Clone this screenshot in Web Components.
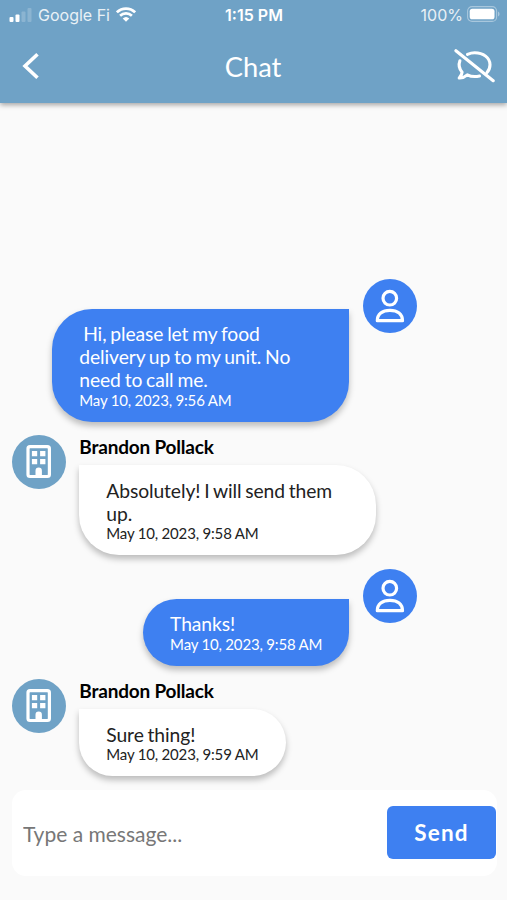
<!DOCTYPE html>
<html lang="en">
<head>
<meta charset="utf-8">
<title>Chat</title>
<style>
    body {
        margin: 0;
        height: 900px;
        display: flex;
        flex-direction: column;
        overflow: hidden;
        background: #fafafa;
        font-family: Lato, "Liberation Sans", sans-serif;
        --accent: #3e80f1;
        --bar: #6fa2c6;
    }
</style>
</head>
<body>
    <chat-header>
        <status-bar slot="status" carrier="Google Fi" time="1:15 PM" battery="100%"></status-bar>
        Chat
    </chat-header>

    <chat-feed>
        <chat-message mine stamp="May 10, 2023, 9:56 AM">&nbsp;Hi, please let my food delivery up to my unit. No need to call me.</chat-message>
        <chat-message from="Brandon Pollack" stamp="May 10, 2023, 9:58 AM">Absolutely! I will send them up.</chat-message>
        <chat-message mine stamp="May 10, 2023, 9:58 AM">Thanks!</chat-message>
        <chat-message from="Brandon Pollack" stamp="May 10, 2023, 9:59 AM">Sure thing!</chat-message>
    </chat-feed>

    <chat-composer placeholder="Type a message...">Send</chat-composer>

<script>
class StatusBar extends HTMLElement {
    constructor() {
        super();
        this.attachShadow({ mode: 'open' });
        this.shadowRoot.innerHTML = `
        <style>
        :host {
            display: grid;
            grid-template-columns: 1fr auto 1fr;
            align-items: center;
            height: 30px;
            padding: 0 7px 0 9px;
            font: 16px/30px Inter, sans-serif;
            color: white;
        }

        div {
            display: flex;
            align-items: center;
        }

        svg {
            display: block;
        }

        .left svg:first-child {
            margin-right: 6px;
        }

        .left svg:last-child {
            margin-top: -2px;
        }

        #carrier {
            margin-right: 6px;
            opacity: 0.85;
        }

        #time {
            font-weight: 600;
            padding-right: 1px;
        }

        .right {
            justify-content: flex-end;
            gap: 4px;
        }

        .right svg {
            margin-top: -2px;
        }

        #battery {
            opacity: 0.85;
        }
        </style>

        <div class="left">
            <svg width="23" height="14" viewBox="0 0 23 14" fill="white">
                <rect x="0.5" y="9" width="4" height="5" rx="1"/>
                <rect x="6.5" y="6.5" width="4" height="7.5" rx="1"/>
                <rect x="12.5" y="3.5" width="4" height="10.5" rx="1" opacity="0.2"/>
                <rect x="18.5" y="0" width="4" height="14" rx="1" opacity="0.2"/>
            </svg>
            <span id="carrier"></span>
            <svg width="20" height="15" viewBox="0 0 20 15" fill="none" stroke="white" stroke-width="2.6">
                <path d="M0.9 5.3a13 13 0 0 1 18.2 0M4.1 8.8a8.4 8.4 0 0 1 11.8 0"/>
                <path d="M10 14.8L6.7 11.6a4.8 4.8 0 0 1 6.6 0z" fill="white" stroke="none"/>
            </svg>
        </div>
        <span id="time"></span>
        <div class="right">
            <span id="battery"></span>
            <svg width="33" height="16" viewBox="0 0 33 16">
                <rect x="0.6" y="0.6" width="29" height="14.8" rx="4.5" fill="none" stroke="white" stroke-width="1.1" opacity="0.4"/>
                <rect x="2.7" y="2.7" width="24.8" height="10.6" rx="2.6" fill="white"/>
                <path d="M31 5.6q1.6 0.8 1.6 2.4t-1.6 2.4z" fill="white" opacity="0.4"/>
            </svg>
        </div>
        `;
    }

    connectedCallback() {
        ['carrier', 'time', 'battery'].forEach(name => {
            this.shadowRoot.getElementById(name).textContent = this.getAttribute(name);
        });
    }
}

class ChatHeader extends HTMLElement {
    constructor() {
        super();
        this.attachShadow({ mode: 'open' });
        this.shadowRoot.innerHTML = `
        <style>
        :host {
            display: block;
            flex: none;
            height: 103px;
            background: var(--bar);
            box-shadow: 0 2px 5px rgba(0,0,0,0.35);
            color: white;
        }

        nav {
            display: grid;
            grid-template-columns: 1fr auto 1fr;
            align-items: center;
            height: 72px;
            padding: 0 11px 0 22px;
        }

        h1 {
            margin: 0;
            padding: 1px 12px 0 0;
            font-size: 27.3px;
            font-weight: 400;
            line-height: 72px;
        }

        svg {
            display: block;
            margin-top: -2px;
            fill: none;
            stroke: white;
        }

        #mute {
            justify-self: end;
        }
        </style>

        <slot name="status"></slot>
        <nav>
            <svg width="18" height="28" viewBox="0 0 18 28" stroke-width="3.6">
                <path d="M15.500 2.200L3 14l12.500 11.800"/>
            </svg>
            <h1><slot></slot></h1>
            <svg id="mute" width="42" height="34" viewBox="0 0 42 34" stroke-width="3.1" stroke-linecap="round" stroke-linejoin="round">
                <path d="M13.500 5.300C16 4.200 18.200 3.700 20.700 3.700c8.600 0 15.300 5.200 15.300 12 0 3-1.100 5.700-3 7.800M25.500 27c-4 0.900-8.600 0.600-12.200-1.200C11 27.800 8.400 29.200 5.200 29c1.900-2 2.800-3.800 2.900-5.800C5.200 19.800 4.500 15.500 5.900 11.800"/>
                <path d="M1.900 1.700l37.300 30"/>
            </svg>
        </nav>
        `;
    }
}

class ChatFeed extends HTMLElement {
    constructor() {
        super();
        this.attachShadow({ mode: 'open' });
        this.shadowRoot.innerHTML = `
        <style>
        :host {
            display: flex;
            flex: 1;
            flex-direction: column;
            justify-content: flex-end;
            gap: 13.5px;
            width: 404.6px;
            padding: 0 0 14px 12px;
        }
        </style>
        <slot></slot>
        `;
    }
}

class ChatAvatar extends HTMLElement {
    constructor() {
        super();
        this.attachShadow({ mode: 'open' });
        this.shadowRoot.innerHTML = `
        <style>
        :host {
            display: block;
            flex: none;
            width: 54px;
            height: 54px;
            border-radius: 50%;
            background: var(--bar);
        }

        :host([kind="person"]) {
            background: var(--accent);
        }

        svg {
            display: block;
        }

        #person,
        :host([kind="person"]) #building {
            display: none;
        }

        :host([kind="person"]) #person {
            display: inline;
        }
        </style>

        <svg width="54" height="54" viewBox="0 0 54 54" fill="none" stroke="white" stroke-width="3.2" stroke-linejoin="round">
            <g id="person">
                <circle cx="26.800" cy="19.200" r="6.800"/>
                <path d="M14.300 41.700c0-6.800 5-10.400 12.600-10.400s12.600 3.600 12.600 10.400z"/>
            </g>
            <g id="building">
                <rect x="16" y="11.700" width="21.400" height="29.800" rx="2"/>
                <path d="M19.900 15.900h5.300v5.300h-5.300zM28.100 15.900h5.300v5.300h-5.300zM19.900 24h5.300v5.300h-5.300zM28.100 24h5.300v5.300h-5.300zM23.500 41v-5.300a3.200 3.200 0 0 1 6.400 0V41z" fill="white" stroke="none"/>
            </g>
        </svg>
        `;
    }
}

class ChatMessage extends HTMLElement {
    constructor() {
        super();
        this.attachShadow({ mode: 'open' });
        this.shadowRoot.innerHTML = `
        <style>
        :host {
            display: flex;
            align-items: flex-start;
            gap: 13.3px;
            color: #222;
        }

        :host([mine]) {
            flex-direction: row-reverse;
            color: white;
        }

        #name {
            height: 30px;
            font-size: 19px;
            font-weight: 700;
            line-height: 24px;
            letter-spacing: -0.2px;
            white-space: nowrap;
            color: #000;
        }

        #bubble {
            box-sizing: border-box;
            width: fit-content;
            max-width: 297px;
            padding: 13.5px 27px;
            border-radius: 0 40px 40px 40px;
            background: white;
            box-shadow: 0 4px 6px rgba(0,0,0,0.25);
            font-size: 19.3px;
            line-height: 23px;
            letter-spacing: -0.1px;
            word-spacing: -1px;
        }

        :host([mine]) #bubble {
            border-radius: 40px 0 40px 40px;
            background: var(--accent);
        }

        #stamp {
            padding-top: 0.6px;
            margin-bottom: -0.6px;
            font-size: 15px;
            line-height: 17px;
            letter-spacing: -0.15px;
            word-spacing: -0.2px;
            white-space: nowrap;
        }
        </style>

        <chat-avatar></chat-avatar>
        <div>
            <div id="name"></div>
            <div id="bubble">
                <slot></slot>
                <div id="stamp"></div>
            </div>
        </div>
        `;
    }

    connectedCallback() {
        const avatar = this.shadowRoot.querySelector('chat-avatar');
        avatar.setAttribute('kind', this.hasAttribute('mine') ? 'person' : 'building');
        this.shadowRoot.querySelector('#name').textContent = this.getAttribute('from') || '';
        this.shadowRoot.querySelector('#stamp').textContent = this.getAttribute('stamp');
    }
}

class ChatComposer extends HTMLElement {
    constructor() {
        super();
        this.attachShadow({ mode: 'open' });
        this.shadowRoot.innerHTML = `
        <style>
        :host {
            display: flex;
            flex: none;
            align-items: center;
            box-sizing: border-box;
            height: 86px;
            margin: 0 10px 24px 12px;
            padding: 0 1px 0 11px;
            border-radius: 14px;
            background: white;
        }

        input {
            flex: 1;
            min-width: 0;
            padding: 0;
            border: 0;
            outline: 0;
            background: none;
            font: 21px Lato, sans-serif;
        }

        input::placeholder {
            color: #777;
        }

        button {
            width: 109px;
            height: 53px;
            margin-bottom: 1px;
            padding: 0;
            border: 0;
            border-radius: 6px;
            background: var(--accent);
            color: white;
            font: 700 22.5px Lato, sans-serif;
            letter-spacing: 1.2px;
        }
        </style>

        <input type="text">
        <button><slot></slot></button>
        `;
    }

    connectedCallback() {
        this.shadowRoot.querySelector('input').placeholder = this.getAttribute('placeholder');
    }
}

customElements.define('status-bar', StatusBar);
customElements.define('chat-header', ChatHeader);
customElements.define('chat-feed', ChatFeed);
customElements.define('chat-avatar', ChatAvatar);
customElements.define('chat-message', ChatMessage);
customElements.define('chat-composer', ChatComposer);
</script>
</body>
</html>
